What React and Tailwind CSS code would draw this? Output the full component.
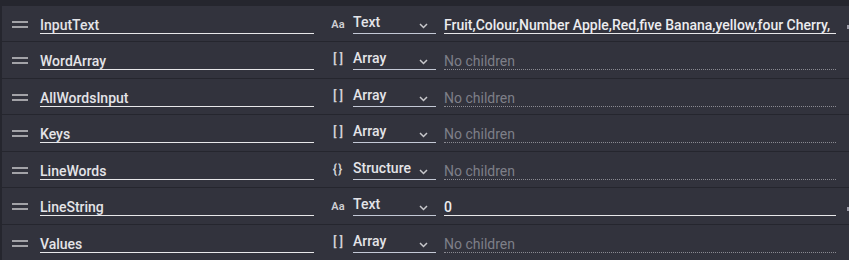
const rows = [
  { name: "InputText", kind: "text", type: "Text", value: "Fruit,Colour,Number Apple,Red,five Banana,yellow,four Cherry," },
  { name: "WordArray", kind: "array", type: "Array" },
  { name: "AllWordsInput", kind: "array", type: "Array" },
  { name: "Keys", kind: "array", type: "Array" },
  { name: "LineWords", kind: "struct", type: "Structure" },
  { name: "LineString", kind: "text", type: "Text", value: "0" },
  { name: "Values", kind: "array", type: "Array" },
];

function TypeIcon({ kind }) {
  if (kind === "text") {
    return <span className="text-[11px] font-semibold text-[#d0d0d4] leading-none mt-[9px]">Aa</span>;
  }
  if (kind === "struct") {
    return <span className="text-[13px] font-semibold text-[#d0d0d4] leading-none mt-[5px] tracking-[1px]">{"{}"}</span>;
  }
  return <span className="text-[13px] font-semibold text-[#d0d0d4] leading-none mt-[5px] tracking-[3px] pl-[3px]">[]</span>;
}

function Row({ row }) {
  const isText = row.kind === "text";
  return (
    <div className="flex items-start h-[36px] bg-[#32333d] pl-[10px]">
      {/* drag handle */}
      <div className="w-[16px] mt-[15px] flex flex-col gap-[3px]">
        <div className="h-[2px] bg-[#a3a3a8]" />
        <div className="h-[2px] bg-[#a3a3a8]" />
      </div>

      {/* name */}
      <div className="ml-[12px] w-[274px] h-[28px] border-b border-[#e8e8ea] flex items-end pb-[1px]">
        <span className="text-[14px] font-medium text-[#e4e4e8] leading-none">{row.name}</span>
      </div>

      {/* type */}
      <div className="ml-[16px] w-[16px] h-[28px] flex items-center justify-center">
        <TypeIcon kind={row.kind} />
      </div>
      <div className="ml-[7px] w-[83px] h-[28px] border-b border-[#c4c9d6] flex items-start justify-between pt-[9px]">
        <span className="text-[14px] font-medium text-[#e4e4e8] leading-none">{row.type}</span>
        <svg width="9" height="6" viewBox="0 0 9 6" className="mt-[8px] mr-[8px]" fill="none">
          <path d="M1 1l3.5 3.5L8 1" stroke="#c8c8cc" strokeWidth="1.5" />
        </svg>
      </div>

      {/* value */}
      <div
        className={
          "ml-[8px] w-[392px] h-[28px] flex items-end pb-[1px] overflow-hidden " +
          (isText ? "border-b border-[#e8e8ea]" : "border-b border-dotted border-[#8a8a92]")
        }
      >
        {isText ? (
          <span className="text-[14px] font-medium text-[#ececef] leading-none whitespace-nowrap">{row.value}</span>
        ) : (
          <span className="text-[14px] text-[#7e7f88] leading-none">No children</span>
        )}
      </div>
      {isText && <div className="ml-[11px] mt-[19px] w-[2px] h-[4px] bg-[#9a9aa6]" />}
    </div>
  );
}

export default function App() {
  return (
    <div
      className="w-[849px] h-[260px] overflow-hidden bg-[#25262e] pt-[6px] pl-[2px] flex flex-col gap-px"
      style={{ fontFamily: 'Roboto, "Noto Sans", sans-serif' }}
    >
      {rows.map((r) => (
        <Row key={r.name} row={r} />
      ))}
    </div>
  );
}
